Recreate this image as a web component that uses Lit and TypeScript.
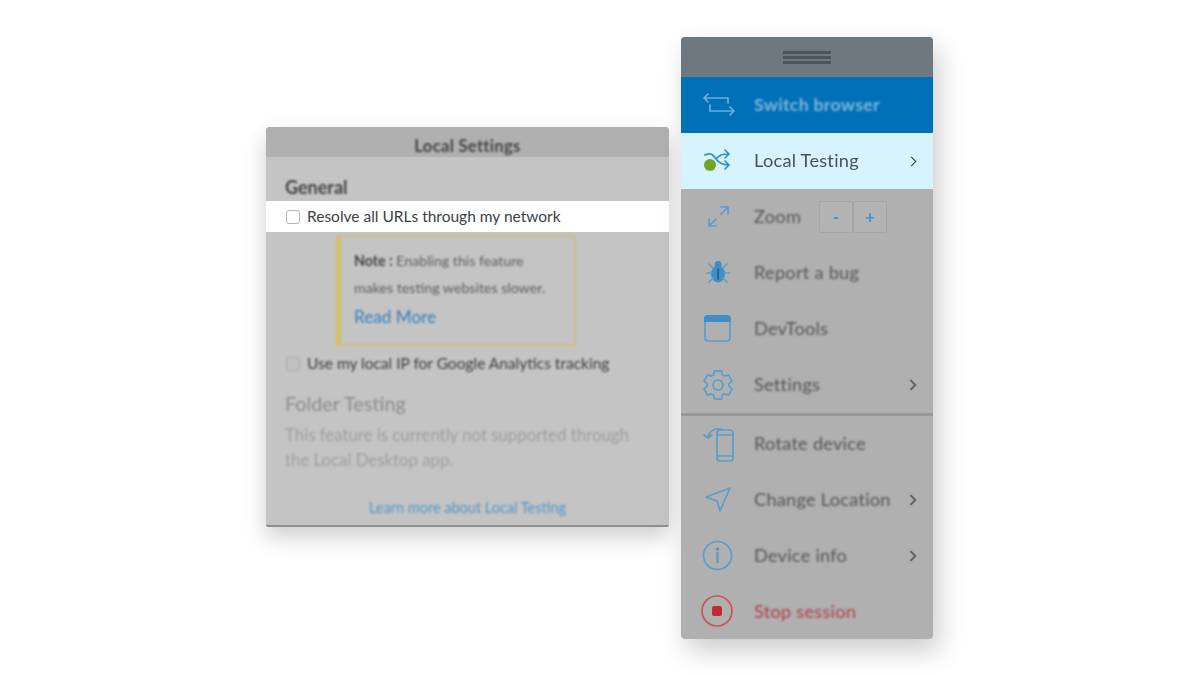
import {LitElement, html, css, svg} from 'lit';
import {customElement} from 'lit/decorators.js';

// six lobed gear, the toolbar settings icon
const gearPath = (cx: number, cy: number) => {
  const pts: string[] = [];
  for (let i = 0; i < 6; i++) {
    const a = (i * Math.PI) / 3 - Math.PI / 2;
    for (const [off, r] of [[-0.42, 11], [-0.24, 14.6], [0.24, 14.6], [0.42, 11]]) {
      pts.push(`${(cx + Math.cos(a + off) * r).toFixed(1)} ${(cy + Math.sin(a + off) * r).toFixed(1)}`);
    }
  }
  return `M${pts.join('L')}Z`;
};

const icons: Record<string, unknown> = {
  swap: svg`<path d="M7 6 3 10l4 4M3 10h24v5M29 19l4 4-4 4M33 23H9v-6"/>`,
  shuffle: svg`<path class="lit" d="M4 11c6-3 8 0 11 4s6 6 13 6M15 15c3-4 6-5 13-5M24 6l4 4-4 4M24 17l4 4-4 4"/><circle cx="9" cy="21" r="6" fill="#6fa81f" stroke="none"/>`,
  zoom: svg`<path d="M8 26l7-7M20 14l7-7M20 7h7v7M8 19v7h7"/>`,
  bug: svg`<g class="solid"><ellipse cx="17" cy="18" rx="7" ry="8.5"/><circle cx="17" cy="8.5" r="3.5"/></g><path d="M8 8l4 4M26 8l-4 4M6 17h5M28 17h-5M8 26l4-4M26 26l-4-4"/><path class="seam" d="M17 13v10"/>`,
  tools: svg`<rect x="4" y="4" width="25" height="25" rx="3"/><path class="solid" d="M3 7a4 4 0 0 1 4-4h19a4 4 0 0 1 4 4v3H3z"/>`,
  gear: svg`<path d="${gearPath(17, 17)}"/><circle cx="17" cy="17" r="5"/>`,
  rotate: svg`<rect x="16" y="3" width="16" height="31" rx="3"/><path d="M16 8h16M16 29h16M7 10C9 3 15 0 22 3M3 8l4 3 4-3"/>`,
  plane: svg`<path d="M5 14 29 5 19 28l-3-10z"/>`,
  info: svg`<circle cx="16.5" cy="16.5" r="14"/><path d="M16.5 14v9" stroke-width="2.4"/><circle class="solid" cx="16.5" cy="10" r="1.5"/>`,
  stop: svg`<circle cx="16" cy="16" r="15"/><rect class="solid" x="11" y="11" width="10" height="10" rx="2"/>`,
};

interface Row {
  label: string;
  icon: string;
  kind?: string;
  more?: boolean;
  zoom?: boolean;
}

const topRows: Row[] = [
  {label: 'Switch browser', icon: 'swap', kind: 'active'},
  {label: 'Local Testing', icon: 'shuffle', kind: 'focus', more: true},
  {label: 'Zoom', icon: 'zoom', zoom: true},
  {label: 'Report a bug', icon: 'bug'},
  {label: 'DevTools', icon: 'tools'},
  {label: 'Settings', icon: 'gear', more: true},
];

const bottomRows: Row[] = [
  {label: 'Rotate device', icon: 'rotate'},
  {label: 'Change Location', icon: 'plane', more: true},
  {label: 'Device info', icon: 'info', more: true},
  {label: 'Stop session', icon: 'stop', kind: 'danger'},
];

@customElement('local-settings')
export class LocalSettings extends LitElement {
  static styles = css`
    :host {
      display: block;
      width: 403px;
      margin-top: 90px;
      background: #c4c4c4;
      border-radius: 4px 4px 2px 2px;
      border-bottom: 2px solid #8f8f8f;
      box-shadow: 0 10px 22px rgba(0, 0, 0, 0.2);
      font-family: 'Lato', 'Noto Sans', sans-serif;
      box-sizing: border-box;
      height: 400px;
    }
    .title {
      height: 30px;
      background: #b0b0b0;
      border-radius: 4px 4px 0 0;
      text-align: center;
      font-size: 16.6px;
      font-weight: 700;
      letter-spacing: 0.3px;
      color: #444;
    }
    .title span {
      display: block;
      height: 30px;
      line-height: 38px;
      filter: blur(0.8px);
    }
    h3 {
      margin: 0;
      height: 44px;
      padding: 18px 0 0 19px;
      box-sizing: border-box;
      line-height: 24px;
      font-size: 18px;
      font-weight: 700;
      color: #444;
      filter: blur(0.8px);
    }
    .check {
      display: flex;
      align-items: center;
      gap: 7px;
      height: 31px;
      padding-left: 20px;
      font-size: 15.5px;
      color: #3c4246;
    }
    .check span {
      display: block;
      margin-bottom: 2px;
    }
    .check i {
      width: 14px;
      height: 14px;
      flex: none;
      box-sizing: border-box;
      border: 1px solid #b5b5b5;
      border-radius: 3px;
      background: #fff;
    }
    .check.on {
      background: #fff;
    }
    .check.off {
      margin-top: 2px;
      color: #3c3c3c;
      filter: blur(0.8px);
    }
    .check.off i {
      background: #c0c0c0;
      border-color: #aaa;
    }
    .note {
      width: 240px;
      height: 111px;
      margin: 3px 0 0 70px;
      padding: 10px 12px 0 13px;
      box-sizing: border-box;
      border: 2px solid #cdbf85;
      border-left: 5px solid #d6c06a;
      font-size: 14.2px;
      line-height: 27px;
      color: #5e5e5e;
      filter: blur(0.8px);
    }
    .note b {
      color: #444;
    }
    .note a {
      display: block;
      margin-top: 2px;
      font-size: 17.2px;
      line-height: 28px;
      color: #357fbb;
    }
    .folder {
      padding: 11px 19px 0;
      filter: blur(0.8px);
    }
    .folder h4 {
      margin: 0;
      font-size: 19.8px;
      font-weight: 400;
      line-height: 26px;
      color: #8c8c8c;
    }
    .folder p {
      margin: 6px 0 0;
      font-size: 16.8px;
      line-height: 25px;
      color: #9e9e9e;
    }
    .learn {
      display: block;
      margin-top: 26px;
      text-align: center;
      font-size: 14.5px;
      line-height: 20px;
      color: #4f95c8;
      filter: blur(0.8px);
    }
  `;

  render() {
    return html`
      <div class="title"><span>Local Settings</span></div>
      <h3>General</h3>
      <label class="check on"><i></i><span>Resolve all URLs through my network</span></label>
      <div class="note">
        <b>Note :</b> Enabling this feature<br />makes testing websites slower.
        <a>Read More</a>
      </div>
      <label class="check off"><i></i><span>Use my local IP for Google Analytics tracking</span></label>
      <div class="folder">
        <h4>Folder Testing</h4>
        <p>This feature is currently not supported through the Local Desktop app.</p>
      </div>
      <a class="learn">Learn more about Local Testing</a>
    `;
  }
}

@customElement('app-root')
export class AppRoot extends LitElement {
  static styles = css`
    :host {
      display: flex;
      align-items: flex-start;
      gap: 12px;
      height: 675px;
      padding: 37px 0 0 266px;
      box-sizing: border-box;
      background: #fff;
      font-family: 'Lato', 'Noto Sans', sans-serif;
    }
    .toolbar {
      width: 252px;
      height: 602px;
      background: #b0b0b0;
      border-radius: 4px;
      overflow: hidden;
    }
    .shadow {
      border-radius: 4px;
      box-shadow: 6px 12px 26px rgba(0, 0, 0, 0.2);
    }
    .grip {
      display: flex;
      flex-direction: column;
      justify-content: center;
      gap: 2px;
      align-items: center;
      height: 40px;
      background: #6f787f;
    }
    .grip i {
      width: 48px;
      height: 3px;
      background: #4c555b;
      filter: blur(0.5px);
    }
    .row {
      display: flex;
      align-items: center;
      height: 56px;
      padding: 0 16px 0 20px;
      font-size: 18.2px;
      letter-spacing: 0.25px;
      color: #555;
    }
    .row svg {
      width: 34px;
      height: 34px;
      flex: none;
      margin-right: 19px;
      fill: none;
      stroke: #5c9dca;
      stroke-width: 1.7;
      stroke-linejoin: round;
      stroke-linecap: round;
      overflow: visible;
      filter: blur(0.6px);
    }
    .row svg .solid {
      fill: #3f8fc6;
      stroke: none;
    }
    .row svg .seam {
      stroke: #1d5d8a;
    }
    .row svg .lit {
      stroke: #2d8fd0;
    }
    .row .label {
      display: block;
      margin-bottom: 2px;
      filter: blur(0.8px);
      white-space: nowrap;
    }
    .chev {
      width: 6px;
      height: 6px;
      margin-left: auto;
      margin-right: 2px;
      border: solid #666;
      border-width: 2px 2px 0 0;
      transform: rotate(45deg);
      filter: blur(0.5px);
    }
    .active {
      background: #0070b9;
      color: #7fb6da;
      font-weight: 700;
      font-size: 17.8px;
    }
    .active svg {
      stroke: #6dafd9;
    }
    .focus {
      background: #d7f3fe;
      color: #46525c;
    }
    .focus svg {
      filter: none;
    }
    .focus .label {
      filter: blur(0.3px);
    }
    .focus .chev {
      border-color: #333;
      border-width: 1.5px 1.5px 0 0;
      filter: none;
    }
    .danger {
      color: #b23f46;
    }
    .danger svg {
      stroke: #c7555a;
    }
    .danger svg .solid {
      fill: #c22a35;
    }
    .divider {
      height: 3px;
      background: #979797;
    }
    .steps {
      display: flex;
      margin-left: 18px;
    }
    .steps span {
      width: 34px;
      height: 32px;
      box-sizing: border-box;
      border: 1px solid #a5a5a5;
      border-radius: 2px;
      background: #b3b3b3;
      text-align: center;
      line-height: 29px;
      font-size: 17px;
      font-weight: 700;
      color: #3f93cf;
      filter: blur(0.6px);
    }
  `;

  private renderRow(row: Row) {
    return html`
      <div class="row ${row.kind ?? ''}">
        <svg viewBox="0 0 34 34">${icons[row.icon]}</svg>
        <span class="label">${row.label}</span>
        ${row.zoom ? html`<div class="steps"><span>-</span><span>+</span></div>` : ''}
        ${row.more ? html`<i class="chev"></i>` : ''}
      </div>
    `;
  }

  render() {
    return html`
      <local-settings></local-settings>
      <div class="shadow">
        <div class="toolbar">
          <div class="grip"><i></i><i></i><i></i></div>
          ${topRows.map((r) => this.renderRow(r))}
          <div class="divider"></div>
          ${bottomRows.map((r) => this.renderRow(r))}
        </div>
      </div>
    `;
  }
}
